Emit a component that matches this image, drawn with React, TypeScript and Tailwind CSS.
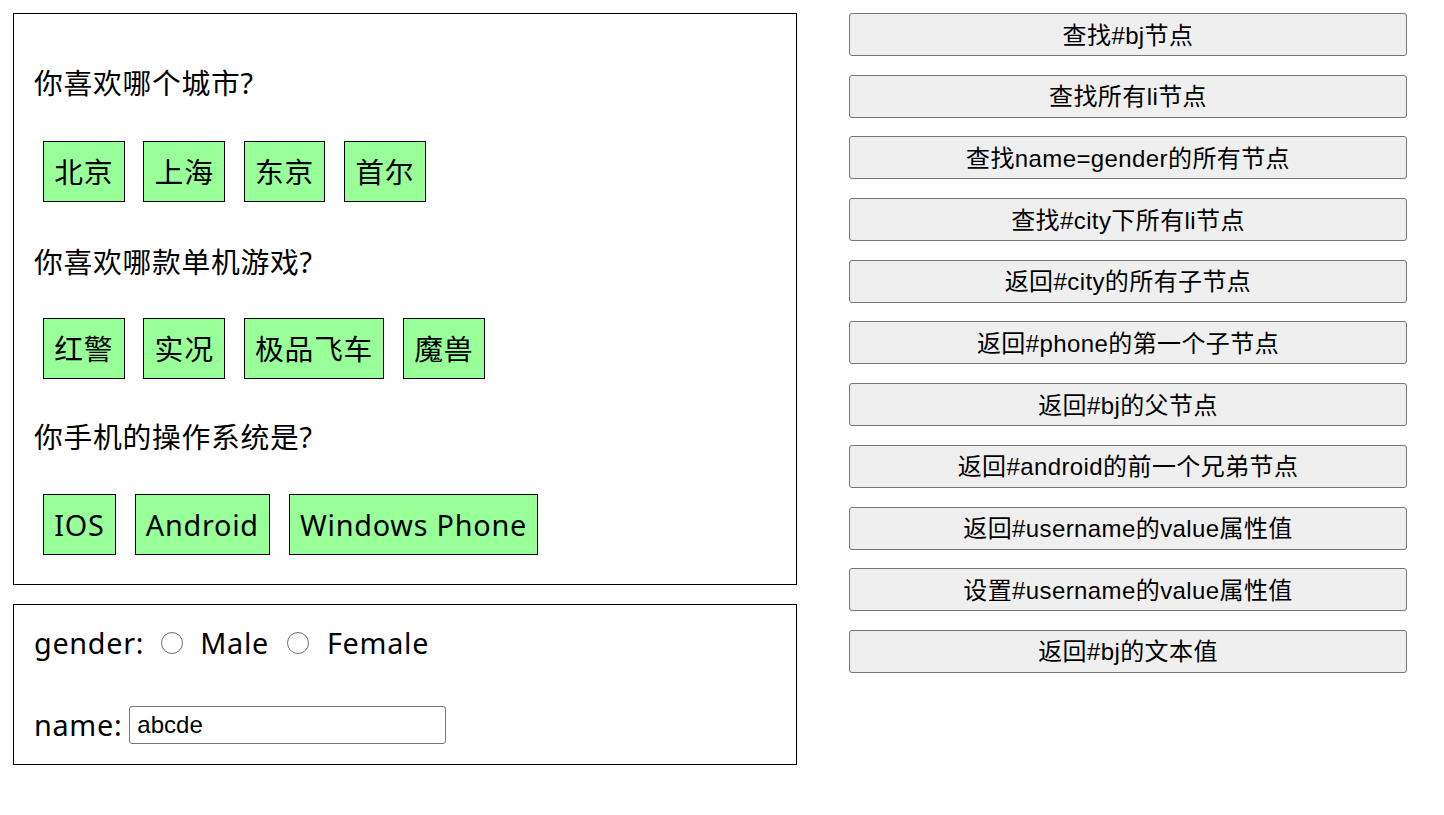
const cities = ['北京', '上海', '东京', '首尔'];
const games = ['红警', '实况', '极品飞车', '魔兽'];
const systems = ['IOS', 'Android', 'Windows Phone'];

const actions = [
  '查找#bj节点',
  '查找所有li节点',
  '查找name=gender的所有节点',
  '查找#city下所有li节点',
  '返回#city的所有子节点',
  '返回#phone的第一个子节点',
  '返回#bj的父节点',
  '返回#android的前一个兄弟节点',
  '返回#username的value属性值',
  '设置#username的value属性值',
  '返回#bj的文本值',
];

const bodyFont = "font-['Noto_Sans','Noto_Sans_CJK_SC',sans-serif]";
const btnFont = "font-['Liberation_Sans','Noto_Sans_CJK_SC',sans-serif]";

function Question({ text }: { text: string }) {
  return <p className="h-[38px] leading-[38px] text-[28.8px] tracking-[0.7px] text-black">{text}</p>;
}

function Options({ items }: { items: string[] }) {
  return (
    <ul className="ml-[9px] flex gap-[18.6px]">
      {items.map((item) => (
        <li
          key={item}
          className="flex h-[61px] items-center border border-black bg-[#99ff99] px-[10.3px] text-[28.8px] leading-[38px] tracking-[0.75px] text-black"
        >
          {item}
        </li>
      ))}
    </ul>
  );
}

function Radio() {
  return <span className="inline-block h-[22px] w-[22px] rounded-full border-[1.5px] border-[#6f6f6f] bg-white" />;
}

export default function App() {
  return (
    <div className={`flex min-h-screen items-start bg-white p-[13px] ${bodyFont}`}>
      {/* Left column */}
      <div className="flex w-[784px] flex-col gap-[19px]">
        <div className="box-border flex h-[572px] flex-col border border-black pl-[20px] pt-[50px]">
          <Question text="你喜欢哪个城市?" />
          <div className="mt-[39px]">
            <Options items={cities} />
          </div>
          <div className="mt-[41px]">
            <Question text="你喜欢哪款单机游戏?" />
          </div>
          <div className="mt-[37px]">
            <Options items={games} />
          </div>
          <div className="mt-[39px]">
            <Question text="你手机的操作系统是?" />
          </div>
          <div className="mt-[38px]">
            <Options items={systems} />
          </div>
        </div>

        <div className="box-border flex h-[161px] flex-col border border-black pl-[20px] pt-[19px]">
          <div className="flex h-[38px] items-center text-[28.8px] tracking-[0.7px] text-black">
            <span>gender:</span>
            <span className="ml-[17px] flex items-center"><Radio /></span>
            <span className="ml-[17px]">Male</span>
            <span className="ml-[18px] flex items-center"><Radio /></span>
            <span className="ml-[18px]">Female</span>
          </div>
          <div className="mt-[44px] flex h-[38px] items-center text-[28.8px] tracking-[0.7px] text-black">
            <span>name:</span>
            <input
              readOnly
              value="abcde"
              className={`ml-[7px] box-border h-[38px] w-[317px] rounded-[3px] border border-[#767676] bg-white px-[7px] text-[24px] tracking-normal text-black outline-none ${btnFont}`}
            />
          </div>
        </div>
      </div>

      {/* Right column */}
      <div className="ml-[52px] flex w-[558px] flex-col gap-[18.7px]">
        {actions.map((label) => (
          <button
            key={label}
            className={`box-border h-[43px] w-full rounded-[3px] border border-[#767676] bg-[#efefef] pt-[2px] text-[24px] leading-none tracking-[0.4px] text-black ${btnFont}`}
          >
            {label}
          </button>
        ))}
      </div>
    </div>
  );
}
